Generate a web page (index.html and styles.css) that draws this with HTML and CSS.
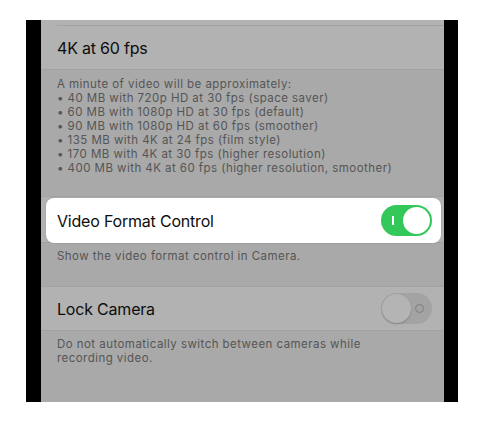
FILE: index.html
```html
<!DOCTYPE html>
<html lang="en">
<head>
<meta charset="UTF-8">
<meta name="viewport" content="width=device-width, initial-scale=1.0">
<title>Camera Settings</title>
<link rel="stylesheet" href="styles.css">
</head>
<body>
    <div class="device">
        <div class="screen">
            <div class="group">
                <div class="row-stub"></div>
                <div class="row">
                    <span class="label">4K at 60 fps</span>
                </div>
            </div>
            <div class="footer footer-first">
                A minute of video will be approximately:<br>
                • 40 MB with 720p HD at 30 fps (space saver)<br>
                • 60 MB with 1080p HD at 30 fps (default)<br>
                • 90 MB with 1080p HD at 60 fps (smoother)<br>
                • 135 MB with 4K at 24 fps (film style)<br>
                • 170 MB with 4K at 30 fps (higher resolution)<br>
                • 400 MB with 4K at 60 fps (higher resolution, smoother)
            </div>

            <div class="group">
                <div class="row highlight-wrap">
                    <div class="highlight">
                        <span class="label">Video Format Control</span>
                        <div class="toggle on"><span class="knob"></span></div>
                    </div>
                </div>
            </div>
            <div class="footer">Show the video format control in Camera.</div>

            <div class="group group-lock">
                <div class="row">
                    <span class="label">Lock Camera</span>
                    <div class="toggle off"><span class="knob"></span></div>
                </div>
            </div>
            <div class="footer">
                Do not automatically switch between cameras while<br>
                recording video.
            </div>
        </div>
    </div>
</body>
</html>
```

FILE: styles.css
```css
body{
    margin: 0;
    background-color: #fff;
    font-family: Inter, "Liberation Sans", sans-serif;
}
.device{
    margin: 20px 0 0 26px;
    width: 432px;
    height: 382px;
    background-color: #000;
    padding: 0 14px 0 15px;
    box-sizing: border-box;
}
.screen{
    height: 100%;
    background-color: #a9a9a9;
    overflow: hidden;
}
.group{
    background-color: #b2b2b2;
    border-bottom: 1px solid #a2a2a2;
}
.row-stub{
    height: 5px;
    border-bottom: 1px solid #a2a2a2;
    margin-left: 16px;
}
.row{
    height: 43px;
    display: flex;
    align-items: center;
    justify-content: space-between;
    padding: 0 12px 0 16px;
}
.label{
    font-size: 16px;
    color: #0d0d0d;
    letter-spacing: -0.2px;
}
.footer{
    font-size: 11.5px;
    letter-spacing: 0.45px;
    line-height: 14px;
    color: #555;
    padding: 6px 16px 0 16px;
}
.footer-first{
    box-sizing: border-box;
    padding-top: 7px;
    height: 126px;
}
.footer-first + .group{
    border-top: 1px solid #a2a2a2;
}
.highlight-wrap{
    height: 45px;
    position: relative;
}
.highlight{
    position: absolute;
    left: 5px;
    right: 3px;
    top: 1px;
    height: 45px;
    background-color: #fff;
    border-radius: 8px;
    box-shadow: 0 0 2px rgba(0,0,0,0.15);
    display: flex;
    align-items: center;
    justify-content: space-between;
    padding: 0 9px 0 11px;
}
.group-lock{
    margin-top: 23px;
    border-top: 1px solid #a2a2a2;
}
.toggle{
    width: 51px;
    height: 31px;
    border-radius: 16px;
    position: relative;
    box-sizing: border-box;
}
.toggle.on{
    background-color: #34c759;
}
.toggle.on::before{
    content: "";
    position: absolute;
    left: 11px;
    top: 11px;
    width: 1.5px;
    height: 9px;
    background-color: #fff;
}
.toggle.on .knob{
    position: absolute;
    right: 2px;
    top: 2px;
    width: 27px;
    height: 27px;
    border-radius: 50%;
    background-color: #fff;
}
.toggle.off{
    background-color: #a3a3a3;
}
.toggle.off::after{
    content: "";
    position: absolute;
    right: 8px;
    top: 11px;
    width: 7px;
    height: 7px;
    border: 1px solid #7e7e7e;
    border-radius: 50%;
}
.toggle.off .knob{
    position: absolute;
    left: 1px;
    top: 1px;
    width: 29px;
    height: 29px;
    border-radius: 50%;
    background-color: #b4b4b4;
    box-shadow: 0 1px 2px rgba(0,0,0,0.2);
}
```
